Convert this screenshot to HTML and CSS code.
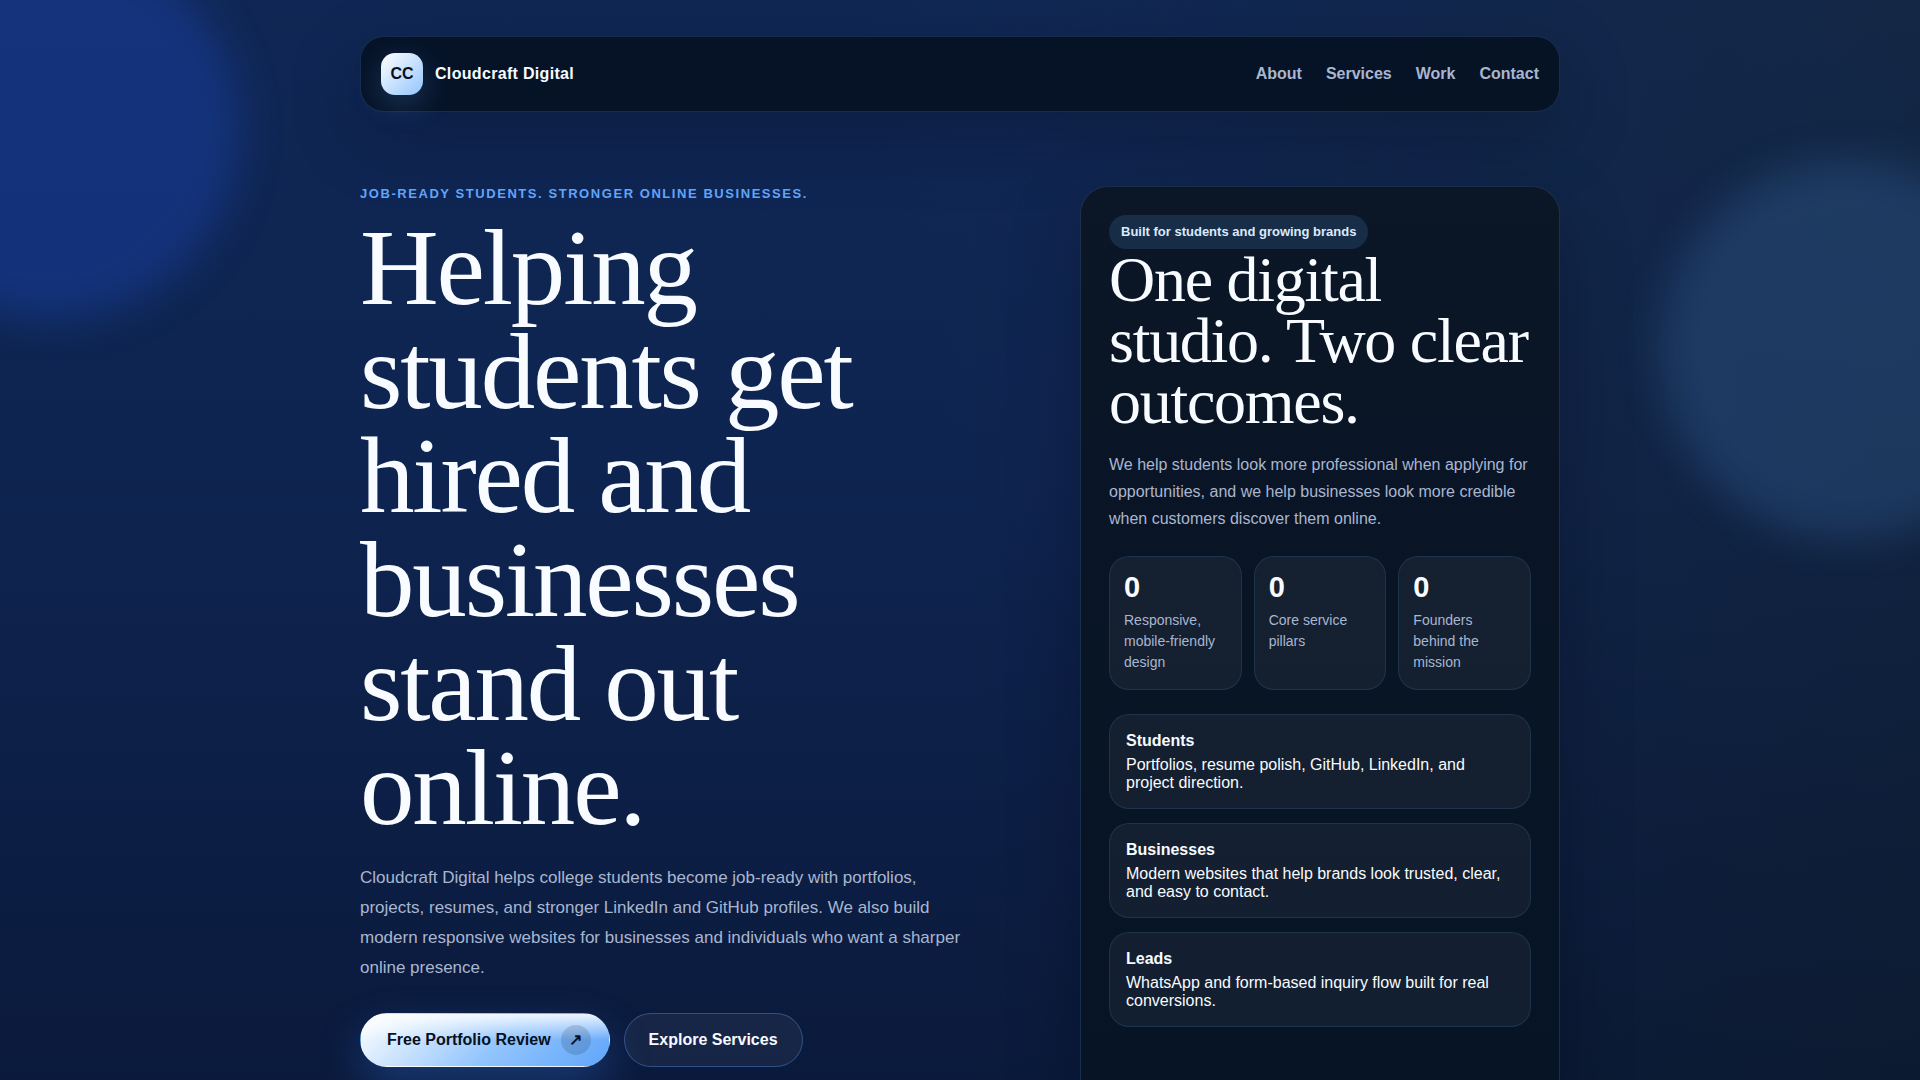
FILE: index.html
```html
<!DOCTYPE html>
<html lang="en">
<head>
<meta charset="utf-8">
<meta name="viewport" content="width=device-width, initial-scale=1">
<title>Cloudcraft Digital</title>
<link rel="stylesheet" href="styles.css">
</head>
<body>
<div class="orbs" aria-hidden="true">
  <span class="orb orb-left"></span>
  <span class="orb orb-right"></span>
</div>
<div class="page">
  <header class="topbar">
    <a class="brand" href="#top"><span class="brand-mark">CC</span><span class="brand-name">Cloudcraft Digital</span></a>
    <nav class="nav">
      <a href="#about">About</a>
      <a href="#services">Services</a>
      <a href="#work">Work</a>
      <a href="#contact">Contact</a>
    </nav>
  </header>
  <main class="hero" id="top">
    <section class="hero-copy">
      <p class="eyebrow">Job-ready students. Stronger online businesses.</p>
      <h1>Helping students get hired and businesses stand out online.</h1>
      <p class="lead">Cloudcraft Digital helps college students become job-ready with portfolios, projects, resumes, and stronger LinkedIn and GitHub profiles. We also build modern responsive websites for businesses and individuals who want a sharper online presence.</p>
      <div class="actions">
        <a class="btn btn-primary" href="#contact">Free Portfolio Review <span class="btn-icon">↗</span></a>
        <a class="btn btn-ghost" href="#services">Explore Services</a>
      </div>
    </section>
    <aside class="panel">
      <span class="badge">Built for students and growing brands</span>
      <h2>One digital studio. Two clear outcomes.</h2>
      <p class="panel-text">We help students look more professional when applying for opportunities, and we help businesses look more credible when customers discover them online.</p>
      <div class="stats">
        <div class="stat"><strong>0</strong><span>Responsive, mobile-friendly design</span></div>
        <div class="stat"><strong>0</strong><span>Core service pillars</span></div>
        <div class="stat"><strong>0</strong><span>Founders behind the mission</span></div>
      </div>
      <div class="outcomes">
        <article class="outcome"><strong>Students</strong><span>Portfolios, resume polish, GitHub, LinkedIn, and project direction.</span></article>
        <article class="outcome"><strong>Businesses</strong><span>Modern websites that help brands look trusted, clear, and easy to contact.</span></article>
        <article class="outcome"><strong>Leads</strong><span>WhatsApp and form-based inquiry flow built for real conversions.</span></article>
      </div>
    </aside>
  </main>
</div>
</body>
</html>
```
FILE: styles.css
```css
:root {
  --text: #f8fbff;
  --muted: #a9b6d0;
  --accent: #60a5fa;
  --line: rgba(96, 165, 250, 0.18);
}

* { box-sizing: border-box; }

body {
  margin: 0;
  min-height: 100vh;
  position: relative;
  overflow-x: hidden;
  font-family: "Liberation Sans", Arial, sans-serif;
  font-size: 16px;
  line-height: 18px;
  color: var(--text);
  background:
    radial-gradient(circle at top right, rgba(147, 197, 253, 0.03), transparent 50%),
    linear-gradient(90deg, transparent 50%, rgba(14, 26, 32, 0.4)),
    linear-gradient(180deg, #102755 0%, #0e2450 40%, #0a1838 100%);
}

h1, h2, p { margin: 0; }
a { color: inherit; text-decoration: none; }

.orbs {
  position: absolute;
  inset: 0;
  overflow: hidden;
  pointer-events: none;
}

.orb {
  position: absolute;
  width: 380px;
  height: 380px;
  border-radius: 50%;
  filter: blur(20px);
}

.orb-left {
  top: -60px;
  left: -140px;
  background: rgba(29, 78, 216, 0.3);
}

.orb-right {
  top: 160px;
  right: -120px;
  background: rgba(96, 165, 250, 0.16);
}

.page {
  position: relative;
  width: min(1200px, 100% - 40px);
  margin: 0 auto;
  padding: 36px 0 80px;
}

.topbar {
  display: flex;
  align-items: center;
  justify-content: space-between;
  padding: 16px 20px;
  border: 1px solid var(--line);
  border-radius: 24px;
  background: rgba(5, 16, 31, 0.86);
  box-shadow: 0 24px 70px rgba(2, 8, 23, 0.28);
}

.brand {
  display: flex;
  align-items: center;
  gap: 12px;
  font-weight: 700;
  letter-spacing: 0.02em;
}

.brand-mark {
  display: grid;
  place-items: center;
  width: 42px;
  height: 42px;
  border-radius: 14px;
  color: #07111f;
  background: linear-gradient(135deg, #ffffff, #93c5fd);
  letter-spacing: 0;
  box-shadow: 0 10px 30px rgba(96, 165, 250, 0.24);
}

.nav {
  display: flex;
  gap: 24px;
  color: var(--muted);
  font-weight: 700;
}

.hero {
  display: grid;
  grid-template-columns: minmax(0, 640px) minmax(0, 480px);
  justify-content: space-between;
  padding-top: 74px;
}

.eyebrow {
  font-size: 13px;
  line-height: 15px;
  font-weight: 700;
  letter-spacing: 0.12em;
  text-transform: uppercase;
  color: var(--accent);
}

h1, h2 {
  font-family: "Liberation Serif", "Times New Roman", serif;
  font-weight: 400;
  letter-spacing: -0.02em;
}

h1 {
  max-width: 560px;
  margin-top: 15px;
  font-size: 109px;
  line-height: 104px;
}

.lead {
  max-width: 620px;
  margin-top: 23px;
  font-size: 17px;
  line-height: 30px;
  color: var(--muted);
}

.actions {
  display: flex;
  flex-wrap: wrap;
  gap: 14px;
  margin-top: 30px;
}

.btn {
  display: inline-flex;
  align-items: center;
  gap: 10px;
  min-height: 54px;
  border: 1px solid transparent;
  border-radius: 27px;
  font-weight: 700;
}

.btn-primary {
  padding: 0 18px 0 26px;
  color: #07111f;
  background:
    linear-gradient(180deg, rgba(255, 255, 255, 0.85), transparent 50%),
    linear-gradient(135deg, #ffffff 0%, #93c5fd 55%, #60a5fa 100%);
  box-shadow: 0 18px 44px rgba(59, 130, 246, 0.3);
}

.btn-icon {
  display: grid;
  place-items: center;
  width: 30px;
  height: 30px;
  border-radius: 50%;
  background: rgba(7, 17, 31, 0.14);
}

.btn-ghost {
  padding: 0 24px;
  border-color: rgba(96, 165, 250, 0.34);
  background: rgba(255, 255, 255, 0.05);
}

.panel {
  min-height: 930px;
  padding: 28px;
  border: 1px solid var(--line);
  border-radius: 28px;
  background: linear-gradient(180deg, #0b1626, #061425);
  box-shadow: 0 24px 70px rgba(2, 8, 23, 0.28);
}

.badge {
  display: block;
  width: fit-content;
  padding: 8px 12px;
  border-radius: 17px;
  font-size: 13px;
  font-weight: 700;
  color: #dbeafe;
  background: rgba(96, 165, 250, 0.16);
}

h2 {
  font-size: 64px;
  line-height: 61px;
}

.panel-text {
  margin-top: 19px;
  line-height: 27px;
  color: var(--muted);
}

.stats {
  display: grid;
  grid-template-columns: repeat(3, 1fr);
  gap: 12px;
  margin-top: 24px;
}

.stat {
  padding: 16px 14px;
  border: 1px solid rgba(96, 165, 250, 0.14);
  border-radius: 20px;
  background: rgba(255, 255, 255, 0.05);
}

.stat strong,
.stat span {
  display: block;
}

.stat strong {
  font-size: 29px;
  line-height: 28px;
}

.stat span {
  margin-top: 9px;
  font-size: 14px;
  line-height: 21px;
  color: var(--muted);
}

.outcomes {
  display: grid;
  gap: 14px;
  margin-top: 24px;
}

.outcome {
  display: grid;
  gap: 6px;
  padding: 17px 16px 16px;
  border: 1px solid rgba(96, 165, 250, 0.14);
  border-radius: 20px;
  background: rgba(255, 255, 255, 0.05);
}

@media (max-width: 1100px) {
  .hero { grid-template-columns: minmax(0, 1fr); gap: 40px; }
}
```
